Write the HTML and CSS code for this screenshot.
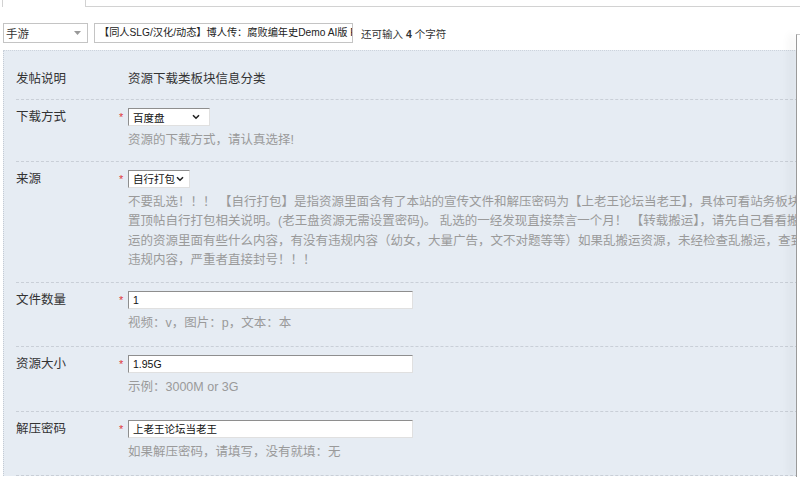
FILE: index.html
```html
<!DOCTYPE html>
<html lang="zh-CN">
<head>
  <meta charset="UTF-8" />
  <title>发帖</title>
  <meta name="viewport" content="width=device-width, initial-scale=1.0" />
  <link rel="stylesheet" href="styles.css">
</head>
<body>
  <div class="tabs"><span class="tab"></span></div>

  <div class="title-bar">
    <div class="type-select">
      <span>手游</span>
      <svg width="7" height="4" viewBox="0 0 7 4"><path d="M0 0h7L3.5 4z" fill="#999"/></svg>
    </div>
    <div class="title-input">【同人SLG/汉化/动态】博人传：腐败编年史Demo AI版 Full</div>
    <span class="counter">还可输入 <strong>4</strong> 个字符</span>
  </div>

  <div class="panel">
    <div class="row intro">
      <div class="label">发帖说明</div>
      <div class="star"></div>
      <div class="field"><span class="value">资源下载类板块信息分类</span></div>
    </div>

    <div class="row short">
      <div class="label">下载方式</div>
      <div class="star">*</div>
      <div class="field">
        <div class="select wide">
          <span>百度盘</span>
          <svg width="8" height="6" viewBox="0 0 8 6"><path d="M1 1.2l3 3 3-3" fill="none" stroke="#222" stroke-width="1.6"/></svg>
        </div>
        <div class="hint">资源的下载方式，请认真选择!</div>
      </div>
    </div>

    <div class="row source">
      <div class="label">来源</div>
      <div class="star">*</div>
      <div class="field">
        <div class="select">
          <span>自行打包</span>
          <svg width="8" height="6" viewBox="0 0 8 6"><path d="M1 1.2l3 3 3-3" fill="none" stroke="#222" stroke-width="1.6"/></svg>
        </div>
        <div class="hint long">
          不要乱选！！！ 【自行打包】是指资源里面含有了本站的宣传文件和解压密码为【上老王论坛当老王】，具体可看站务板块<br>
          置顶帖自行打包相关说明。(老王盘资源无需设置密码)。 乱选的一经发现直接禁言一个月！ 【转载搬运】，请先自己看看搬<br>
          运的资源里面有些什么内容，有没有违规内容（幼女，大量广告，文不对题等等）如果乱搬运资源，未经检查乱搬运，查到有<br>
          违规内容，严重者直接封号！！！
        </div>
      </div>
    </div>

    <div class="row">
      <div class="label">文件数量</div>
      <div class="star">*</div>
      <div class="field">
        <div class="text-input">1</div>
        <div class="hint">视频：v，图片：p，文本：本</div>
      </div>
    </div>

    <div class="row">
      <div class="label">资源大小</div>
      <div class="star">*</div>
      <div class="field">
        <div class="text-input">1.95G</div>
        <div class="hint">示例：3000M or 3G</div>
      </div>
    </div>

    <div class="row">
      <div class="label">解压密码</div>
      <div class="star">*</div>
      <div class="field">
        <div class="text-input">上老王论坛当老王</div>
        <div class="hint">如果解压密码，请填写，没有就填：无</div>
      </div>
    </div>
  </div>

  <div class="side-window"></div>
</body>
</html>
```

FILE: styles.css
```css
* {
  box-sizing: border-box;
}

html,
body {
  overflow: hidden;
}

body {
  margin: 0;
  width: 800px;
  height: 477px;
  background: #fff;
  color: #333;
  font-family: "Liberation Sans", "Noto Sans CJK SC", sans-serif;
}

.tabs {
  display: flex;
  height: 7px;
}

.tab {
  width: 84px;
  margin-left: 2px;
  border-left: 1px solid #d2d2d2;
  border-right: 1px solid #d2d2d2;
}

.tabs::after {
  content: "";
  flex: 1;
  border-bottom: 1px solid #d2d2d2;
}

.title-bar {
  display: flex;
  align-items: center;
  margin-top: 16px;
  height: 20px;
  font-size: 10.5px;
}

.type-select {
  display: flex;
  align-items: center;
  justify-content: space-between;
  width: 85px;
  height: 20px;
  margin-left: 3px;
  padding: 0 6px 0 2px;
  border: 1px solid #c4c4c4;
  font-size: 11.5px;
  color: #333;
}

.title-input {
  width: 259px;
  height: 20px;
  margin-left: 6px;
  padding: 0 0 0 4px;
  border: 1px solid #c4c4c4;
  font-size: 10.2px;
  line-height: 18px;
  white-space: nowrap;
  overflow: hidden;
  color: #222;
}

.counter {
  margin-left: 8px;
  color: #333;
}

.panel {
  margin: 7px 0 0 3px;
  width: 820px;
  padding-top: 11px;
  background: #e6ecf3;
  border-top: 1px dotted #ccd3dc;
  border-left: 1px dotted #c4cbd4;
  font-size: 12.5px;
}

.row {
  display: flex;
  margin-left: 12px;
  padding: 8px 0 13px;
  border-bottom: 1px dashed #c9cfd7;
}

.row.intro {
  padding-bottom: 11px;
}

.row.short {
  padding-bottom: 10px;
}

.row.source {
  padding-bottom: 11px;
}

.label {
  width: 103px;
  line-height: 18px;
  color: #333;
}

.star {
  width: 9px;
  line-height: 18px;
  color: #e0383a;
  font-size: 11px;
}

.field {
  flex: 1;
}

.value {
  line-height: 18px;
  color: #333;
}

.select,
.text-input {
  height: 18px;
  background: #fff;
  border: 1px solid;
  border-color: #8e8e8e #e0e0e0 #e0e0e0 #8e8e8e;
  font-size: 10.5px;
  color: #111;
}

.select {
  display: flex;
  align-items: center;
  justify-content: space-between;
  width: 62px;
  padding: 0 5px 0 4px;
}

.select.wide {
  width: 82px;
  padding-right: 9px;
}

.text-input {
  width: 285px;
  padding-left: 4px;
  line-height: 16px;
}

.hint {
  margin-top: 5px;
  line-height: 19.5px;
  color: #9a9a9a;
}

.hint.long {
  white-space: nowrap;
}

.side-window {
  position: fixed;
  left: 796px;
  top: 34px;
  right: 0;
  bottom: 0;
  background: #fff;
  border-left: 1px solid #9a9a9a;
  border-top: 1px solid #c8c8c8;
  box-shadow: -6px 0 8px rgba(0, 0, 0, 0.07);
}
```
